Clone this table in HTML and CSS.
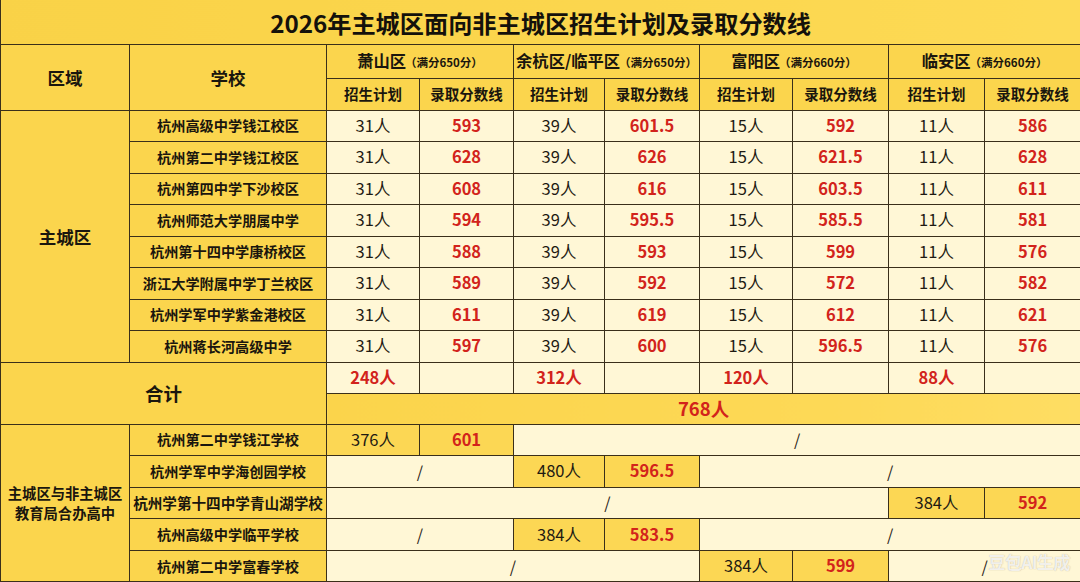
FILE: index.html
```html
<!DOCTYPE html>
<html lang="zh-CN">
<head>
<meta charset="utf-8">
<title>2026年主城区面向非主城区招生计划及录取分数线</title>
<link rel="stylesheet" href="styles.css">
</head>
<body>
<div class="page">
<table class="sheet">
  <colgroup>
    <col class="c-area"><col class="c-school">
    <col class="c-a"><col class="c-b"><col class="c-c"><col class="c-d">
    <col class="c-e"><col class="c-f"><col class="c-g"><col class="c-h">
  </colgroup>
  <tr class="r-title"><td colspan="10" class="title">2026年主城区面向非主城区招生计划及录取分数线</td></tr>
  <tr class="r-h1">
    <td rowspan="2" class="hd big">区域</td>
    <td rowspan="2" class="hd big">学校</td>
    <td colspan="2" class="hd dist">萧山区<span class="full">（满分650分）</span></td>
    <td colspan="2" class="hd dist">余杭区/临平区<span class="full">（满分650分）</span></td>
    <td colspan="2" class="hd dist">富阳区<span class="full">（满分660分）</span></td>
    <td colspan="2" class="hd dist">临安区<span class="full">（满分660分）</span></td>
  </tr>
  <tr class="r-h2">
    <td class="hd sub">招生计划</td><td class="hd sub">录取分数线</td>
    <td class="hd sub">招生计划</td><td class="hd sub">录取分数线</td>
    <td class="hd sub">招生计划</td><td class="hd sub">录取分数线</td>
    <td class="hd sub">招生计划</td><td class="hd sub">录取分数线</td>
  </tr>
  <tr class="r-d">
    <td rowspan="8" class="hd area">主城区</td>
    <td class="hd school">杭州高级中学钱江校区</td>
    <td class="v">31人</td><td class="v s">593</td>
    <td class="v">39人</td><td class="v s">601.5</td>
    <td class="v">15人</td><td class="v s">592</td>
    <td class="v">11人</td><td class="v s">586</td>
  </tr>
  <tr class="r-d">
    <td class="hd school">杭州第二中学钱江校区</td>
    <td class="v">31人</td><td class="v s">628</td>
    <td class="v">39人</td><td class="v s">626</td>
    <td class="v">15人</td><td class="v s">621.5</td>
    <td class="v">11人</td><td class="v s">628</td>
  </tr>
  <tr class="r-d">
    <td class="hd school">杭州第四中学下沙校区</td>
    <td class="v">31人</td><td class="v s">608</td>
    <td class="v">39人</td><td class="v s">616</td>
    <td class="v">15人</td><td class="v s">603.5</td>
    <td class="v">11人</td><td class="v s">611</td>
  </tr>
  <tr class="r-d">
    <td class="hd school">杭州师范大学朋属中学</td>
    <td class="v">31人</td><td class="v s">594</td>
    <td class="v">39人</td><td class="v s">595.5</td>
    <td class="v">15人</td><td class="v s">585.5</td>
    <td class="v">11人</td><td class="v s">581</td>
  </tr>
  <tr class="r-d">
    <td class="hd school">杭州第十四中学康桥校区</td>
    <td class="v">31人</td><td class="v s">588</td>
    <td class="v">39人</td><td class="v s">593</td>
    <td class="v">15人</td><td class="v s">599</td>
    <td class="v">11人</td><td class="v s">576</td>
  </tr>
  <tr class="r-d">
    <td class="hd school">浙江大学附属中学丁兰校区</td>
    <td class="v">31人</td><td class="v s">589</td>
    <td class="v">39人</td><td class="v s">592</td>
    <td class="v">15人</td><td class="v s">572</td>
    <td class="v">11人</td><td class="v s">582</td>
  </tr>
  <tr class="r-d">
    <td class="hd school">杭州学军中学紫金港校区</td>
    <td class="v">31人</td><td class="v s">611</td>
    <td class="v">39人</td><td class="v s">619</td>
    <td class="v">15人</td><td class="v s">612</td>
    <td class="v">11人</td><td class="v s">621</td>
  </tr>
  <tr class="r-d">
    <td class="hd school">杭州蒋长河高级中学</td>
    <td class="v">31人</td><td class="v s">597</td>
    <td class="v">39人</td><td class="v s">600</td>
    <td class="v">15人</td><td class="v s">596.5</td>
    <td class="v">11人</td><td class="v s">576</td>
  </tr>
  <tr class="r-t1">
    <td colspan="2" rowspan="2" class="hd total">合计</td>
    <td class="v s">248人</td><td class="v"></td>
    <td class="v s">312人</td><td class="v"></td>
    <td class="v s">120人</td><td class="v"></td>
    <td class="v s">88人</td><td class="v"></td>
  </tr>
  <tr class="r-t2">
    <td colspan="8" class="grand">768人</td>
  </tr>
  <tr class="r-b">
    <td rowspan="5" class="hd joint">主城区与非主城区<br>教育局合办高中</td>
    <td class="hd school">杭州第二中学钱江学校</td>
    <td class="y">376人</td><td class="y s">601</td>
    <td colspan="6" class="v na">/</td>
  </tr>
  <tr class="r-b">
    <td class="hd school">杭州学军中学海创园学校</td>
    <td colspan="2" class="v na">/</td>
    <td class="y">480人</td><td class="y s">596.5</td>
    <td colspan="4" class="v na">/</td>
  </tr>
  <tr class="r-b">
    <td class="hd school wide">杭州学第十四中学青山湖学校</td>
    <td colspan="6" class="v na">/</td>
    <td class="y">384人</td><td class="y s">592</td>
  </tr>
  <tr class="r-b">
    <td class="hd school">杭州高级中学临平学校</td>
    <td colspan="2" class="v na">/</td>
    <td class="y">384人</td><td class="y s">583.5</td>
    <td colspan="4" class="v na">/</td>
  </tr>
  <tr class="r-b">
    <td class="hd school">杭州第二中学富春学校</td>
    <td colspan="4" class="v na">/</td>
    <td class="y">384人</td><td class="y s">599</td>
    <td colspan="2" class="v na">/</td>
  </tr>
</table>
<div class="watermark">豆包AI生成</div>
</div>
</body>
</html>
```

FILE: styles.css
```css
html, body {
  margin: 0;
  padding: 0;
  background: #fff7d6;
}
body {
  font-family: "Noto Sans CJK SC", "Noto Sans", sans-serif;
  color: #1f1a12;
  overflow: hidden;
}
.page {
  position: relative;
  width: 1080px;
  height: 582px;
  overflow: hidden;
}
.sheet {
  width: 1080px;
  table-layout: fixed;
  border-collapse: collapse;
  border-left: 1.5px solid #3a2f1a;
}
.c-area { width: 129px; }
.c-school { width: 197px; }
.c-a { width: 93px; }
.c-b { width: 94px; }
.c-c { width: 91px; }
.c-d { width: 95px; }
.c-e { width: 93px; }
.c-f { width: 96px; }
.c-g { width: 96px; }
.c-h { width: 96px; }

.sheet td {
  border: 1.3px solid #3a2f1a;
  padding: 0;
  text-align: center;
  vertical-align: middle;
  white-space: nowrap;
  overflow: hidden;
  line-height: 1.2;
}
.sheet tr td:first-child { border-left: 1.5px solid #3a2f1a; }

.r-title { height: 44px; }
.r-h1 { height: 34px; }
.r-h2 { height: 32px; }
.r-d { height: 31.5px; }
.r-t1 { height: 31px; }
.r-t2 { height: 31px; }
.r-b { height: 31.6px; }

.title {
  background: linear-gradient(90deg, #f9d247 0%, #fbd64e 60%, #fdda56 100%);
  font-size: 24.2px;
  font-weight: 700;
  color: #14110b;
  border-top: none !important;
  padding-top: 1px !important;
}
.hd {
  background: #fbd54d;
  font-weight: 700;
  color: #1a160e;
}
.big { font-size: 17.5px; }
.dist { font-size: 16.3px; }
.full {
  font-size: 11.5px;
  font-weight: 700;
  margin-left: -1px;
}
.sub { font-size: 14.5px; }
.area { font-size: 17.5px; }
.school { font-size: 14.2px; }
.school.wide { font-size: 14.6px; letter-spacing: 0; }
.total { font-size: 18.5px; }
.joint { font-size: 14.3px; line-height: 1.42 !important; }

.v {
  background: #fff7d6;
  font-size: 16.5px;
  color: #1e1a12;
}
.y {
  background: #fcd754;
  font-size: 16.5px;
  color: #1e1a12;
}
.s {
  color: #d2231b;
  font-weight: 700;
}
.na {
  font-size: 16px;
  color: #2a2418;
}
.grand {
  background: linear-gradient(90deg, #fbd44b 0%, #fdd957 70%, #fedd63 100%);
  color: #d2231b;
  font-weight: 700;
  font-size: 18.5px;
}
.watermark {
  position: absolute;
  right: 10px;
  bottom: 12px;
  font-family: "Noto Sans CJK SC", sans-serif;
  font-size: 17px;
  font-weight: 700;
  line-height: 1;
  color: rgba(255, 255, 255, 0.82);
  text-shadow: 0 0 1px rgba(120, 110, 90, 0.55);
  letter-spacing: -0.5px;
}
```
